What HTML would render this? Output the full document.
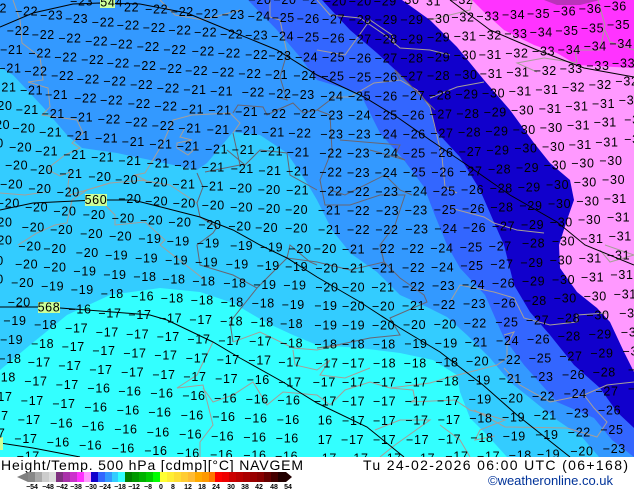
<!DOCTYPE html>
<html><head><meta charset="utf-8"><style>
html,body{margin:0;padding:0;background:#fff}
svg{display:block;font-family:"Liberation Sans",sans-serif}
.l text{font-size:37.5px;text-anchor:middle;dominant-baseline:central;fill:#000;letter-spacing:2px}
.b{fill:none;stroke:#a79f98;stroke-width:1}
.d{fill:none;stroke:#6b6570;stroke-width:1}
.k{fill:none;stroke:#000;stroke-width:1}
</style></head><body>
<svg width="634" height="490" viewBox="0 0 634 490" xmlns="http://www.w3.org/2000/svg">
<rect width="634" height="457" fill="#33ffff"/>
<polygon fill="#33ccff" points="0,0 634,0 634,457 507,457 487,435 470,418 460,392 457,375 433,360 400,353 360,348 317,345 293,335 267,323 233,303 200,292 160,288 110,295 67,315 30,345 0,370"/>
<polygon fill="#3399ff" points="0,0 634,0 634,457 599,457 582,437 557,420 530,398 510,382 490,358 467,335 447,317 427,307 400,295 377,272 350,253 344,245 332,230 317,200 307,183 287,153 260,135 233,132 207,163 197,170 150,160 117,153 82,148 67,135 43,107 13,75 0,67"/>
<polygon fill="#3366ff" points="248,0 277,30 300,57 317,80 360,93 380,133 404,160 424,187 434,213 447,245 460,268 485,295 504,338 524,365 557,402 594,418 612,440 634,457 634,0"/>
<polygon fill="#1100cc" points="322,0 350,30 377,53 403,77 430,107 435,130 460,157 480,190 490,213 504,245 514,285 530,312 550,335 574,365 600,388 617,412 634,428 634,0"/>
<polygon fill="#ff99ff" points="402,0 430,20 457,47 484,80 510,110 534,143 550,163 570,180 574,200 567,220 559,245 560,268 577,292 597,308 610,322 624,352 634,372 634,0"/>
<polygon fill="#ff33ff" points="472,0 484,12 504,30 534,45 557,53 577,65 634,68 634,0"/>
<polygon fill="#bb33bb" points="544,0 557,5 580,5 600,0"/>

<!-- borders -->
<polyline class="b" points="13,0 20,20 22,43 40,57 43,80 28,82 48,88 50,107 42,115 77,120 83,133 72,143 80,148 65,155 52,165 48,170 60,176 70,172 68,185 70,195 110,183 145,180 135,175 145,173 163,143 173,120 192,115 230,113 240,123 233,133"/>
<polyline class="b" points="18,245 37,233 55,225 67,223 72,200 87,190 110,183"/>
<polyline class="b" points="0,193 25,195 45,192"/>
<polyline class="b" points="185,128 180,137 192,140 177,143 177,148 188,155 197,147"/>
<polyline class="b" points="140,180 170,185 197,203"/>
<polyline class="b" points="105,205 115,215 115,225 145,222 165,240 160,245 205,280"/>
<polyline class="b" points="160,0 175,15 203,20 240,10"/>
<polyline class="d" points="197,173 203,187 197,203 200,217 217,227 213,233 197,245 200,265 233,275 257,288 230,322 233,342"/>
<polyline class="d" points="233,113 238,105 263,107 267,115 277,110 293,103 303,113 317,110 334,97 350,97"/>
<polyline class="d" points="227,150 245,165 260,150 287,153 290,175 317,190"/>
<polyline class="d" points="277,97 287,100 280,77 287,53"/>
<polyline class="b" points="287,53 280,20 270,17 270,0"/>
<polyline class="d" points="233,133 240,165 205,172"/>
<polyline class="d" points="257,288 287,258 317,262 350,270 384,262"/>
<polyline class="d" points="317,110 330,115 332,150 320,180 325,205 350,205 380,195 405,195 395,225 380,245 384,262"/>
<polyline class="b" points="334,97 350,97 374,83 400,80 417,90 430,107 434,123 442,157 445,187 457,193"/>
<polyline class="b" points="430,98 457,87 484,82"/>
<polyline class="b" points="537,72 517,63 544,58 577,63"/>
<polyline class="b" points="317,50 345,55 370,20 392,35 395,45"/>
<polyline class="b" points="317,0 330,15 360,18 385,35 400,48 430,50 450,55"/>
<polyline class="b" points="430,20 470,10 472,0"/>
<polyline class="b" points="577,63 575,50 600,50 605,25 598,0"/>
<polyline class="b" points="605,30 610,42 634,50"/>
<polyline class="b" points="450,208 484,217 494,223 517,230 544,233"/>
<polyline class="d" points="400,80 395,70 405,80 425,100 435,110"/>
<polyline class="d" points="340,140 400,145 395,155 405,160 370,150"/>
<polyline class="d" points="330,190 345,195 385,175 400,190 412,195"/>
<polyline class="d" points="380,245 384,262 400,278 424,295 427,302 390,318 400,335 370,338 337,345 317,348"/>
<polyline class="b" points="450,302 460,285 494,292 514,298 524,318 550,325 577,322 577,315 607,313"/>
<polyline class="b" points="504,335 514,332 507,345 507,358 497,365 450,377 430,383 390,388 413,390 415,400 410,402 455,400 470,410 505,420 480,430 475,440 495,436"/>
<polyline class="b" points="504,368 520,385 550,402 584,395 607,385 634,382"/>
<polyline class="b" points="584,395 594,408 607,422 597,437 567,428 505,427 474,410"/>
<polyline class="b" points="605,245 634,255 610,262 600,250"/>
<polyline class="b" points="213,342 197,375 177,388 203,385 213,425 200,442 200,457"/>
<polyline class="b" points="203,388 213,402 233,395 253,382 267,405 283,392 317,395 330,405 345,390 370,382 390,388"/>
<polyline class="b" points="233,342 260,332 293,348 317,350 340,345"/>
<polyline class="b" points="293,350 295,365 317,370 330,360 320,375 345,378 370,368"/>
<polyline class="b" points="375,430 400,420 430,420 395,445 380,457"/>
<polyline class="b" points="440,425 460,440 470,457"/>
<polyline class="d" points="287,258 290,245 310,262 317,265"/>

<!-- contour lines -->
<polyline class="k" points="0,27 33,13 73,4 100,3 140,4 187,13 233,32 277,50 317,75 364,97 397,117 430,140 467,165 510,195 557,222 585,245 634,265"/>
<polyline class="k" points="0,210 33,203 96,200 133,200 157,206 200,217 233,230 260,245 287,258 317,277 360,302 400,328 440,352 483,385 517,415 570,457"/>
<polyline class="k" points="0,307 38,307 60,308 100,311 150,315 167,320 213,342 240,358 283,382 317,403 367,427 404,457"/>
<polyline class="k" points="0,443 33,448 80,457"/>
<polyline class="k" points="450,0 490,30 537,50 584,68 634,77"/>

<rect x="85" y="194" width="22" height="12" fill="#ccff99"/>
<rect x="38" y="302" width="22" height="11" fill="#ccff99"/>
<rect x="100" y="0" width="15" height="8" fill="#ccff99"/>
<rect x="0" y="437" width="3" height="13" fill="#ccff99"/>

<g class="l" transform="scale(.33333)">
<g>
<text x=10 y=25>2</text><text x=245 y=5>−23</text><text x=335 y=8>544</text><text x=395 y=22>22</text><text x=470 y=28>−22</text><text x=547 y=36>−22</text><text x=622 y=42>−22</text><text x=700 y=45>−23</text><text x=778 y=50>−24</text><text x=850 y=54>−25</text><text x=925 y=57>−26</text><text x=780 y=0>−20</text><text x=855 y=0>−20</text><text x=930 y=0>−2</text>
<text x=80 y=35>−22</text><text x=155 y=47>−23</text><text x=230 y=57>−23</text><text x=310 y=67>−22</text><text x=385 y=76>−22</text><text x=463 y=84>−22</text><text x=540 y=92>−22</text><text x=617 y=98>−22</text><text x=695 y=103>−22</text><text x=770 y=107>−23</text><text x=848 y=110>−24</text><text x=925 y=113>−25</text>
<text x=55 y=93>−22</text><text x=130 y=105>−22</text><text x=210 y=115>−22</text><text x=290 y=125>−22</text><text x=365 y=133>−22</text><text x=445 y=141>−22</text><text x=525 y=150>−22</text><text x=610 y=155>−22</text><text x=688 y=160>−22</text><text x=770 y=165>−22</text><text x=840 y=168>−23</text><text x=920 y=172>−24</text>
<text x=35 y=150>−21</text><text x=120 y=160>−22</text><text x=198 y=172>−22</text><text x=278 y=180>−22</text><text x=355 y=190>−22</text><text x=435 y=198>−22</text><text x=513 y=207>−22</text><text x=590 y=213>−22</text><text x=670 y=218>−22</text><text x=750 y=222>−22</text><text x=830 y=225>−21</text><text x=915 y=228>−24</text>
<text x=30 y=205>−21</text><text x=108 y=215>−22</text><text x=188 y=228>−22</text><text x=265 y=238>−22</text><text x=345 y=245>−22</text><text x=425 y=255>−22</text><text x=505 y=265>−22</text><text x=585 y=270>−21</text><text x=665 y=275>−21</text><text x=760 y=278>−22</text><text x=840 y=282>−22</text><text x=910 y=285>−23</text>
<text x=15 y=263>−21</text><text x=95 y=272>−21</text><text x=170 y=285>−21</text><text x=257 y=295>−22</text><text x=335 y=302>−22</text><text x=418 y=312>−22</text><text x=498 y=320>−22</text><text x=578 y=328>−21</text><text x=660 y=332>−21</text><text x=740 y=336>−21</text><text x=825 y=342>−22</text><text x=915 y=342>−22</text>
<text x=15 y=318>20</text><text x=82 y=330>−21</text><text x=160 y=342>−21</text><text x=245 y=352>−21</text><text x=328 y=358>−22</text><text x=410 y=368>−22</text><text x=490 y=378>−22</text><text x=570 y=385>−21</text><text x=655 y=390>−21</text><text x=740 y=393>−21</text><text x=820 y=398>−21</text><text x=900 y=400>−22</text>
<text x=8 y=375>20</text><text x=72 y=386>−20</text><text x=152 y=398>−21</text><text x=235 y=408>−21</text><text x=320 y=416>−21</text><text x=400 y=426>−21</text><text x=483 y=433>−21</text><text x=565 y=440>−21</text><text x=650 y=448>−21</text><text x=730 y=450>−21</text><text x=815 y=455>−21</text><text x=895 y=458>−21</text>
<text x=0 y=430>0</text><text x=62 y=442>−20</text><text x=140 y=454>−21</text><text x=225 y=465>−21</text><text x=308 y=473>−21</text><text x=390 y=483>−21</text><text x=475 y=490>−21</text><text x=558 y=497>−21</text><text x=640 y=503>−21</text><text x=727 y=507>−21</text><text x=810 y=513>−21</text><text x=893 y=515>−21</text>
<text x=50 y=497>−20</text><text x=125 y=510>−20</text><text x=213 y=522>−21</text><text x=300 y=531>−20</text><text x=380 y=540>−20</text><text x=470 y=547>−20</text><text x=552 y=553>−21</text><text x=638 y=560>−21</text><text x=723 y=565>−20</text><text x=808 y=570>−20</text><text x=893 y=572>−21</text>
<text x=35 y=553>−20</text><text x=120 y=567>−20</text><text x=205 y=578>−20</text><text x=288 y=600>560</text><text x=390 y=597>−20</text><text x=470 y=605>−20</text><text x=553 y=610>−20</text><text x=640 y=617>−20</text><text x=725 y=622>−20</text><text x=808 y=627>−20</text><text x=890 y=630>−20</text>
<text x=25 y=610>−20</text><text x=110 y=623>−20</text><text x=195 y=635>−20</text><text x=283 y=645>−20</text><text x=370 y=655>−20</text><text x=455 y=662>−20</text><text x=540 y=668>−20</text><text x=630 y=675>−20</text><text x=720 y=680>−20</text><text x=800 y=684>−20</text><text x=890 y=686>−20</text>
<text x=15 y=667>20</text><text x=100 y=682>−20</text><text x=185 y=690>−20</text><text x=275 y=702>−20</text><text x=362 y=710>−20</text><text x=450 y=717>−19</text><text x=535 y=725>−19</text><text x=625 y=730>−19</text><text x=725 y=738>−19</text><text x=815 y=743>−19</text><text x=900 y=747>−20</text>
<text x=15 y=722>20</text><text x=90 y=740>−20</text><text x=165 y=747>−20</text><text x=262 y=759>−20</text><text x=350 y=767>−19</text><text x=440 y=775>−19</text><text x=530 y=782>−19</text><text x=620 y=787>−19</text><text x=712 y=793>−19</text><text x=805 y=798>−19</text><text x=890 y=801>−19</text>
</g>
<g transform="translate(951,0)">
<text x=55 y=5>−20</text><text x=130 y=5>−20</text><text x=205 y=5>−29</text><text x=285 y=0>30</text><text x=350 y=5>31</text><text x=435 y=0>−32</text>
<text x=50 y=58>−27</text><text x=130 y=60>−28</text><text x=208 y=60>−29</text><text x=285 y=60>−29</text><text x=365 y=57>−30</text><text x=438 y=53>−32</text><text x=513 y=50>−33</text><text x=590 y=45>−34</text><text x=665 y=42>−35</text><text x=743 y=35>−36</text><text x=820 y=27>−36</text><text x=895 y=20>−36</text>
<text x=50 y=115>−26</text><text x=130 y=118>−27</text><text x=208 y=118>−28</text><text x=285 y=118>−29</text><text x=365 y=113>−29</text><text x=445 y=110>−31</text><text x=520 y=107>−32</text><text x=597 y=102>−33</text><text x=673 y=98>−34</text><text x=750 y=93>−35</text><text x=827 y=85>−35</text><text x=905 y=75>−35</text>
<text x=50 y=173>−25</text><text x=130 y=175>−26</text><text x=208 y=175>−27</text><text x=285 y=175>−28</text><text x=365 y=172>−29</text><text x=445 y=167>−30</text><text x=520 y=165>−31</text><text x=600 y=160>−32</text><text x=680 y=155>−33</text><text x=757 y=150>−34</text><text x=835 y=140>−34</text><text x=912 y=132>−34</text>
<text x=48 y=230>−25</text><text x=130 y=232>−25</text><text x=208 y=232>−26</text><text x=285 y=230>−27</text><text x=365 y=228>−28</text><text x=447 y=225>−30</text><text x=523 y=222>−31</text><text x=603 y=218>−31</text><text x=685 y=213>−32</text><text x=763 y=207>−33</text><text x=843 y=198>−33</text><text x=920 y=190>−33</text>
<text x=45 y=290>−24</text><text x=128 y=290>−25</text><text x=208 y=290>−26</text><text x=290 y=288>−27</text><text x=370 y=287>−28</text><text x=450 y=283>−29</text><text x=530 y=280>−30</text><text x=610 y=275>−31</text><text x=690 y=270>−31</text><text x=770 y=263>−32</text><text x=850 y=255>−32</text><text x=930 y=245>−32</text>
<text x=45 y=346>−23</text><text x=128 y=347>−24</text><text x=208 y=347>−25</text><text x=290 y=346>−26</text><text x=372 y=344>−27</text><text x=453 y=342>−28</text><text x=535 y=337>−29</text><text x=617 y=332>−30</text><text x=700 y=327>−31</text><text x=780 y=320>−31</text><text x=860 y=312>−31</text><text x=940 y=302>−31</text>
<text x=45 y=403>−23</text><text x=128 y=404>−23</text><text x=208 y=404>−24</text><text x=292 y=403>−26</text><text x=375 y=401>−27</text><text x=458 y=398>−28</text><text x=540 y=394>−29</text><text x=622 y=390>−30</text><text x=703 y=384>−30</text><text x=785 y=377>−31</text><text x=865 y=368>−31</text><text x=945 y=360>−3</text>
<text x=42 y=460>−22</text><text x=125 y=461>−23</text><text x=210 y=461>−24</text><text x=292 y=460>−25</text><text x=375 y=459>−26</text><text x=460 y=456>−27</text><text x=543 y=451>−29</text><text x=627 y=446>−30</text><text x=710 y=441>−30</text><text x=790 y=435>−31</text><text x=870 y=427>−31</text><text x=945 y=418>−3</text>
<text x=42 y=518>−22</text><text x=125 y=519>−23</text><text x=208 y=519>−24</text><text x=293 y=518>−25</text><text x=378 y=517>−26</text><text x=462 y=514>−27</text><text x=548 y=508>−28</text><text x=632 y=504>−29</text><text x=715 y=497>−30</text><text x=798 y=490>−30</text><text x=882 y=483>−30</text>
<text x=42 y=575>−22</text><text x=125 y=576>−22</text><text x=210 y=576>−23</text><text x=298 y=574>−24</text><text x=382 y=574>−25</text><text x=467 y=570>−26</text><text x=553 y=566>−28</text><text x=637 y=562>−29</text><text x=722 y=555>−30</text><text x=805 y=547>−30</text><text x=890 y=540>−30</text>
<text x=38 y=632>−21</text><text x=125 y=633>−22</text><text x=212 y=633>−23</text><text x=298 y=632>−23</text><text x=385 y=630>−25</text><text x=470 y=627>−26</text><text x=555 y=623>−28</text><text x=642 y=618>−29</text><text x=728 y=612>−30</text><text x=813 y=604>−30</text><text x=895 y=597>−31</text>
<text x=38 y=690>−21</text><text x=125 y=690>−22</text><text x=210 y=690>−22</text><text x=300 y=689>−23</text><text x=387 y=687>−24</text><text x=473 y=684>−26</text><text x=560 y=680>−27</text><text x=647 y=675>−29</text><text x=733 y=668>−30</text><text x=818 y=660>−30</text><text x=905 y=653>−31</text>
<text x=650 y=730>−28</text><text x=740 y=725>−30</text><text x=825 y=717>−31</text><text x=910 y=710>−31</text>
</g>
<g transform="translate(0,735)">
<text x=0 y=48>0</text><text x=80 y=58>−20</text><text x=165 y=68>−20</text><text x=255 y=80>−19</text><text x=345 y=90>−19</text><text x=435 y=96>−18</text><text x=522 y=104>−18</text><text x=612 y=110>−18</text><text x=705 y=115>−18</text><text x=795 y=120>−19</text><text x=885 y=122>−19</text>
<text x=0 y=103>0</text><text x=68 y=114>−20</text><text x=158 y=125>−19</text><text x=247 y=135>−19</text><text x=337 y=147>−18</text><text x=428 y=155>−16</text><text x=517 y=160>−18</text><text x=607 y=167>−18</text><text x=697 y=173>−18</text><text x=790 y=176>−18</text><text x=880 y=180>−19</text>
<text x=58 y=172>−20</text><text x=147 y=188>568</text><text x=240 y=193>−16</text><text x=330 y=205>−17</text><text x=420 y=210>−17</text><text x=512 y=220>−17</text><text x=603 y=225>−17</text><text x=695 y=230>−18</text><text x=787 y=233>−18</text><text x=875 y=237>−18</text>
<text x=45 y=228>−19</text><text x=137 y=240>−18</text><text x=230 y=250>−17</text><text x=322 y=262>−17</text><text x=413 y=268>−17</text><text x=505 y=276>−17</text><text x=597 y=283>−17</text><text x=690 y=288>−17</text><text x=782 y=290>−17</text><text x=875 y=295>−18</text>
<text x=35 y=285>−19</text><text x=128 y=297>−18</text><text x=220 y=306>−17</text><text x=312 y=318>−17</text><text x=405 y=325>−17</text><text x=498 y=332>−17</text><text x=592 y=340>−17</text><text x=685 y=345>−17</text><text x=780 y=347>−17</text><text x=870 y=352>−17</text>
<text x=30 y=342>−18</text><text x=118 y=353>−17</text><text x=210 y=363>−17</text><text x=303 y=375>−17</text><text x=398 y=382>−17</text><text x=492 y=390>−17</text><text x=585 y=396>−17</text><text x=680 y=402>−17</text><text x=775 y=405>−16</text><text x=870 y=412>−17</text>
<text x=25 y=398>18</text><text x=108 y=410>−17</text><text x=202 y=420>−17</text><text x=297 y=431>−16</text><text x=390 y=440>−16</text><text x=486 y=446>−16</text><text x=582 y=453>−16</text><text x=677 y=460>−16</text><text x=772 y=463>−16</text><text x=867 y=467>−16</text>
<text x=15 y=456>17</text><text x=97 y=468>−17</text><text x=192 y=477>−17</text><text x=288 y=488>−16</text><text x=385 y=497>−16</text><text x=480 y=503>−16</text><text x=577 y=512>−16</text><text x=672 y=516>−16</text><text x=768 y=521>−16</text><text x=865 y=525>−16</text>
<text x=15 y=513>7</text><text x=88 y=525>−17</text><text x=185 y=535>−16</text><text x=280 y=545>−16</text><text x=378 y=553>−16</text><text x=475 y=562>−16</text><text x=572 y=568>−16</text><text x=668 y=574>−16</text><text x=765 y=578>−16</text><text x=862 y=581>−16</text>
<text x=5 y=565>7</text><text x=78 y=582>−17</text><text x=175 y=593>−16</text><text x=272 y=602>−16</text><text x=370 y=610>−16</text><text x=468 y=618>−16</text><text x=565 y=625>−16</text><text x=665 y=630>−16</text><text x=765 y=632>−16</text><text x=860 y=635>−16</text>
<text x=85 y=635>−17</text>
</g>
<g transform="translate(951,735)">
<text x=25 y=12>−20</text><text x=110 y=14>−21</text><text x=200 y=12>−22</text><text x=288 y=12>−22</text><text x=375 y=10>−24</text><text x=463 y=8>−25</text><text x=550 y=5>−27</text>
<text x=30 y=70>−20</text><text x=110 y=70>−21</text><text x=200 y=70>−21</text><text x=290 y=69>−22</text><text x=377 y=67>−24</text><text x=465 y=63>−25</text><text x=555 y=59>−27</text><text x=645 y=54>−29</text><text x=733 y=47>−30</text><text x=820 y=40>−31</text><text x=905 y=32>−31</text>
<text x=30 y=127>−20</text><text x=110 y=127>−20</text><text x=198 y=127>−21</text><text x=290 y=126>−22</text><text x=380 y=123>−23</text><text x=470 y=120>−24</text><text x=560 y=116>−26</text><text x=650 y=110>−29</text><text x=740 y=105>−30</text><text x=827 y=97>−31</text><text x=915 y=90>−31</text>
<text x=27 y=183>−19</text><text x=110 y=184>−20</text><text x=200 y=184>−20</text><text x=290 y=183>−21</text><text x=382 y=180>−22</text><text x=473 y=177>−23</text><text x=563 y=175>−26</text><text x=655 y=168>−28</text><text x=745 y=161>−30</text><text x=835 y=155>−30</text><text x=925 y=148>−31</text>
<text x=27 y=241>−19</text><text x=110 y=241>−19</text><text x=200 y=241>−20</text><text x=293 y=240>−20</text><text x=385 y=238>−20</text><text x=475 y=235>−22</text><text x=570 y=232>−25</text><text x=662 y=226>−27</text><text x=755 y=220>−28</text><text x=843 y=212>−30</text><text x=930 y=205>−3</text>
<text x=27 y=298>−18</text><text x=110 y=298>−18</text><text x=202 y=298>−18</text><text x=297 y=297>−19</text><text x=388 y=295>−19</text><text x=478 y=292>−21</text><text x=572 y=288>−24</text><text x=665 y=283>−26</text><text x=757 y=275>−28</text><text x=850 y=268>−29</text><text x=935 y=262>−3</text>
<text x=30 y=355>−17</text><text x=110 y=355>−17</text><text x=203 y=355>−18</text><text x=295 y=355>−18</text><text x=390 y=353>−18</text><text x=482 y=349>−20</text><text x=578 y=345>−22</text><text x=670 y=340>−25</text><text x=762 y=334>−27</text><text x=855 y=326>−29</text><text x=940 y=320>−3</text>
<text x=22 y=412>−17</text><text x=110 y=413>−17</text><text x=203 y=413>−17</text><text x=298 y=412>−17</text><text x=392 y=410>−18</text><text x=487 y=406>−19</text><text x=580 y=402>−21</text><text x=675 y=396>−23</text><text x=770 y=390>−26</text><text x=862 y=383>−28</text><text x=945 y=375>−</text>
<text x=25 y=470>−17</text><text x=110 y=470>−17</text><text x=203 y=470>−17</text><text x=298 y=470>−17</text><text x=395 y=468>−17</text><text x=490 y=464>−19</text><text x=585 y=460>−20</text><text x=680 y=454>−22</text><text x=775 y=447>−24</text><text x=870 y=440>−27</text><text x=945 y=432>−</text>
<text x=25 y=527>16</text><text x=110 y=528>−17</text><text x=203 y=528>−17</text><text x=300 y=527>−17</text><text x=397 y=525>−17</text><text x=492 y=521>−18</text><text x=590 y=518>−19</text><text x=685 y=512>−21</text><text x=782 y=505>−23</text><text x=878 y=497>−26</text>
<text x=25 y=585>17</text><text x=107 y=585>−17</text><text x=203 y=585>−17</text><text x=302 y=585>−17</text><text x=398 y=583>−17</text><text x=495 y=579>−18</text><text x=592 y=575>−19</text><text x=690 y=570>−19</text><text x=787 y=563>−22</text><text x=885 y=555>−25</text>
<text x=25 y=640>−17</text><text x=120 y=640>−17</text><text x=220 y=640>−17</text><text x=320 y=640>−17</text><text x=420 y=635>−17</text><text x=515 y=635>−17</text><text x=610 y=632>−18</text><text x=695 y=628>−19</text><text x=795 y=620>−20</text><text x=892 y=612>−23</text>
</g>
</g>

<rect x="0" y="457" width="634" height="33" fill="#fff"/>
<text x="1" y="470" font-size="14" textLength="302" lengthAdjust="spacing">Height/Temp. 500 hPa [cdmp][°C] NAVGEM</text>
<text x="363" y="470" font-size="14" textLength="265" lengthAdjust="spacing">Tu 24-02-2026 06:00 UTC (06+168)</text>
<text x="488" y="485" font-size="13" fill="#003399" textLength="125" lengthAdjust="spacing">©weatheronline.co.uk</text>

<!-- legend -->
<polygon points="17,477 28,472 28,482" fill="#808080"/>
<polygon points="292,477 286,472 286,482" fill="#220000"/>
<g>
<rect x="28" y="472" width="7" height="10" fill="#888888"/><rect x="35" y="472" width="7" height="10" fill="#aaaaaa"/><rect x="42" y="472" width="7" height="10" fill="#cccccc"/><rect x="49" y="472" width="7" height="10" fill="#dddddd"/>
<rect x="56" y="472" width="7" height="10" fill="#7f307f"/><rect x="63" y="472" width="7" height="10" fill="#aa30aa"/><rect x="70" y="472" width="7" height="10" fill="#cc30cc"/><rect x="77" y="472" width="7" height="10" fill="#ff30ff"/><rect x="84" y="472" width="7" height="10" fill="#ff99ff"/>
<rect x="91" y="472" width="7" height="10" fill="#1100cc"/><rect x="98" y="472" width="7" height="10" fill="#3366ff"/><rect x="105" y="472" width="7" height="10" fill="#3399ff"/><rect x="112" y="472" width="6" height="10" fill="#33ccff"/><rect x="118" y="472" width="7" height="10" fill="#33ffff"/>
<rect x="125" y="472" width="7" height="10" fill="#007f00"/><rect x="132" y="472" width="7" height="10" fill="#009900"/><rect x="139" y="472" width="7" height="10" fill="#00b200"/><rect x="146" y="472" width="7" height="10" fill="#00cc00"/><rect x="153" y="472" width="7" height="10" fill="#00ff00"/>
<rect x="160" y="472" width="7" height="10" fill="#ffff33"/><rect x="167" y="472" width="7" height="10" fill="#ffee33"/><rect x="174" y="472" width="7" height="10" fill="#ffdd33"/><rect x="181" y="472" width="7" height="10" fill="#ffcc33"/><rect x="188" y="472" width="7" height="10" fill="#ffbb33"/><rect x="195" y="472" width="7" height="10" fill="#ffaa00"/><rect x="202" y="472" width="7" height="10" fill="#ff9900"/><rect x="209" y="472" width="6" height="10" fill="#ff7700"/>
<rect x="215" y="472" width="7" height="10" fill="#ff0000"/><rect x="222" y="472" width="7" height="10" fill="#ee0000"/><rect x="229" y="472" width="7" height="10" fill="#cc0000"/><rect x="236" y="472" width="7" height="10" fill="#bb0000"/><rect x="243" y="472" width="7" height="10" fill="#aa0000"/><rect x="250" y="472" width="7" height="10" fill="#990000"/><rect x="257" y="472" width="7" height="10" fill="#880000"/><rect x="264" y="472" width="7" height="10" fill="#660000"/><rect x="271" y="472" width="7" height="10" fill="#440000"/><rect x="278" y="472" width="8" height="10" fill="#220000"/>
</g>
<g font-size="7" text-anchor="middle" font-weight="bold" fill="#000">
<text x="32" y="489">−54</text><text x="48" y="489">−48</text><text x="62" y="489">−42</text><text x="76" y="489">−38</text><text x="91" y="489">−30</text><text x="105" y="489">−24</text><text x="120" y="489">−18</text><text x="134" y="489">−12</text><text x="148" y="489">−8</text><text x="161" y="489">0</text><text x="173" y="489">8</text><text x="188" y="489">12</text><text x="202" y="489">18</text><text x="216" y="489">24</text><text x="231" y="489">30</text><text x="245" y="489">38</text><text x="259" y="489">42</text><text x="274" y="489">48</text><text x="288" y="489">54</text>
</g>
</svg>
</body></html>
